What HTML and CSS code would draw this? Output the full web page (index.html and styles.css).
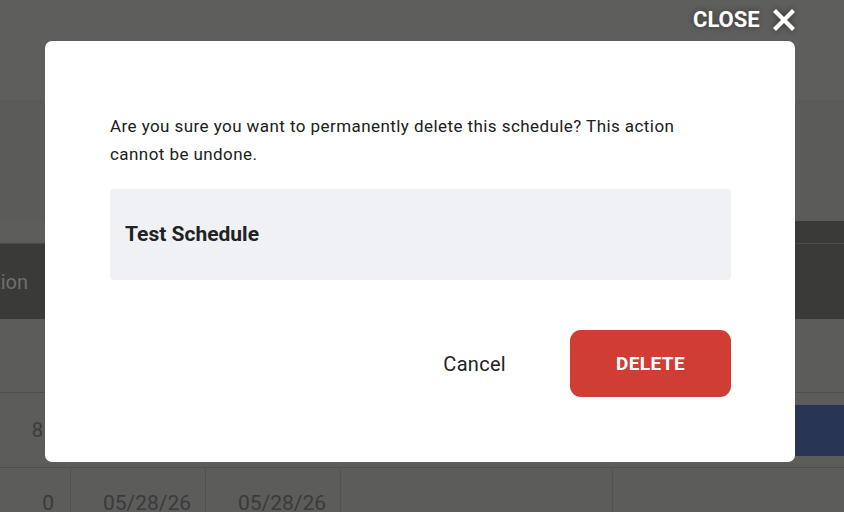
FILE: index.html
```html
<!DOCTYPE html>
<html>
<head>
<meta charset="utf-8">
<link rel="stylesheet" href="styles.css">
</head>
<body>
<div class="page">
  <div class="band-top"></div>
  <div class="band-mid"></div>
  <div class="toolbar"><div class="tb-left"></div><div class="tb-right"></div></div>
  <div class="thead">
    <div class="cell c0 th">Location</div>
  </div>
  <div class="row r0"></div>
  <div class="row r1">
    <div class="cell c0 num n1">8</div>
    <div class="cell c1"></div>
    <div class="cell c2"></div>
    <div class="cell c3"></div>
    <div class="cell c4"><span class="blue-btn"></span></div>
  </div>
  <div class="row r2">
    <div class="cell c0 num n2">0</div>
    <div class="cell c1 date">05/28/26</div>
    <div class="cell c2 date">05/28/26</div>
    <div class="cell c3"></div>
    <div class="cell c4"></div>
  </div>
</div>

<button class="close-btn">CLOSE
  <svg width="22" height="22" viewBox="0 0 22 22"><path d="M3 3 L19 19 M19 3 L3 19" stroke="#fff" stroke-width="4.2" stroke-linecap="square"/></svg>
</button>

<div class="modal">
  <p class="msg">Are you sure you want to permanently delete this schedule? This action cannot be undone.</p>
  <div class="item">Test Schedule</div>
  <div class="actions">
    <button class="cancel">Cancel</button>
    <button class="delete">DELETE</button>
  </div>
</div>
</body>
</html>
```
FILE: styles.css
```css
* { box-sizing: border-box; }
html, body { margin: 0; padding: 0; }
body {
  width: 844px;
  height: 512px;
  overflow: hidden;
  background: #5c5c5a;
  font-family: Roboto, "Liberation Sans", sans-serif;
  position: relative;
}
.page { display: flex; flex-direction: column; height: 512px; overflow: hidden; }
.band-top { height: 100px; flex: none; background: #5e5e5c; }
.band-mid { height: 121px; flex: none; background: #5b5b59; }
.toolbar { height: 22px; flex: none; display: flex; }
.tb-left { flex: 1; background: #5d5d5b; }
.tb-right { flex: 1; background: #3a3a38; }
.thead {
  height: 76px;
  flex: none;
  background: #3a3a38;
  border-top: 1px solid #4a4a48;
  display: flex;
  align-items: center;
}
.cell { display: flex; align-items: center; white-space: nowrap; overflow: hidden; }
.c0 { width: 71px; }
.c1 { width: 135px; }
.c2 { width: 135px; }
.c3 { width: 272px; }
.c4 { flex: 1; }
.th {
  justify-content: flex-end;
  padding-right: 43px;
  color: #6f6f6d;
  font-size: 20px;
  height: 100%;
}
.row { display: flex; flex: none; border-bottom: 1px solid #4f4f4d; }
.r0 { height: 74px; }
.r1 { height: 75px; }
.r1 .cell { height: 100%; }
.r2 { height: 45px; border-bottom: none; }
.r2 .cell {
  height: 100%;
  align-items: flex-start;
  padding-top: 23px;
  overflow: visible;
  border-right: 1px solid #525250;
}
.r2 .c4 { border-right: none; }
.num { justify-content: flex-end; color: #3b3b3a; font-size: 20px; }
.n1 { padding-right: 28px; }
.n2 { padding-right: 16px; font-size: 21px; }
.date { padding-left: 32px; color: #3b3b3a; font-size: 21px; }
.r1 .c4 { justify-content: flex-end; align-items: flex-start; padding-top: 12px; }
.blue-btn { display: block; width: 49px; height: 51px; background: #283553; }

.close-btn {
  position: absolute;
  top: 7px;
  left: 693px;
  background: none;
  border: none;
  padding: 0;
  display: flex;
  align-items: center;
  gap: 13px;
  color: #fff;
  font-family: Roboto, "Liberation Sans", sans-serif;
  font-weight: 700;
  font-size: 22px;
  line-height: 26px;
  text-shadow: 0 0 6px rgba(0,0,0,0.45);
}
.close-btn svg { filter: drop-shadow(0 0 3px rgba(0,0,0,0.45)); }

.modal {
  position: absolute;
  left: 45px;
  top: 41px;
  width: 750px;
  height: 421px;
  background: #fff;
  border-radius: 7px;
  padding: 71px 64px 0 65px;
}
.msg {
  margin: 0;
  font-size: 17px;
  letter-spacing: 0.43px;
  line-height: 28px;
  color: #202020;
  padding-right: 40px;
}
.item {
  margin-top: 21px;
  height: 91px;
  background: #f0f1f5;
  border-radius: 4px;
  display: flex;
  align-items: center;
  padding: 0 15px 2px;
  font-weight: 700;
  font-size: 21px;
  color: #222;
}
.actions {
  margin-top: 50px;
  display: flex;
  justify-content: flex-end;
  align-items: center;
  gap: 64px;
}
.cancel {
  background: none;
  border: none;
  padding: 0;
  font-family: Roboto, "Liberation Sans", sans-serif;
  font-size: 20px;
  letter-spacing: 0.3px;
  color: #222;
}
.delete {
  width: 161px;
  height: 67px;
  background: #d03d35;
  border: none;
  border-radius: 11px;
  color: #fff;
  font-family: Roboto, "Liberation Sans", sans-serif;
  font-weight: 700;
  font-size: 19px;
  letter-spacing: 0.4px;
}
```
